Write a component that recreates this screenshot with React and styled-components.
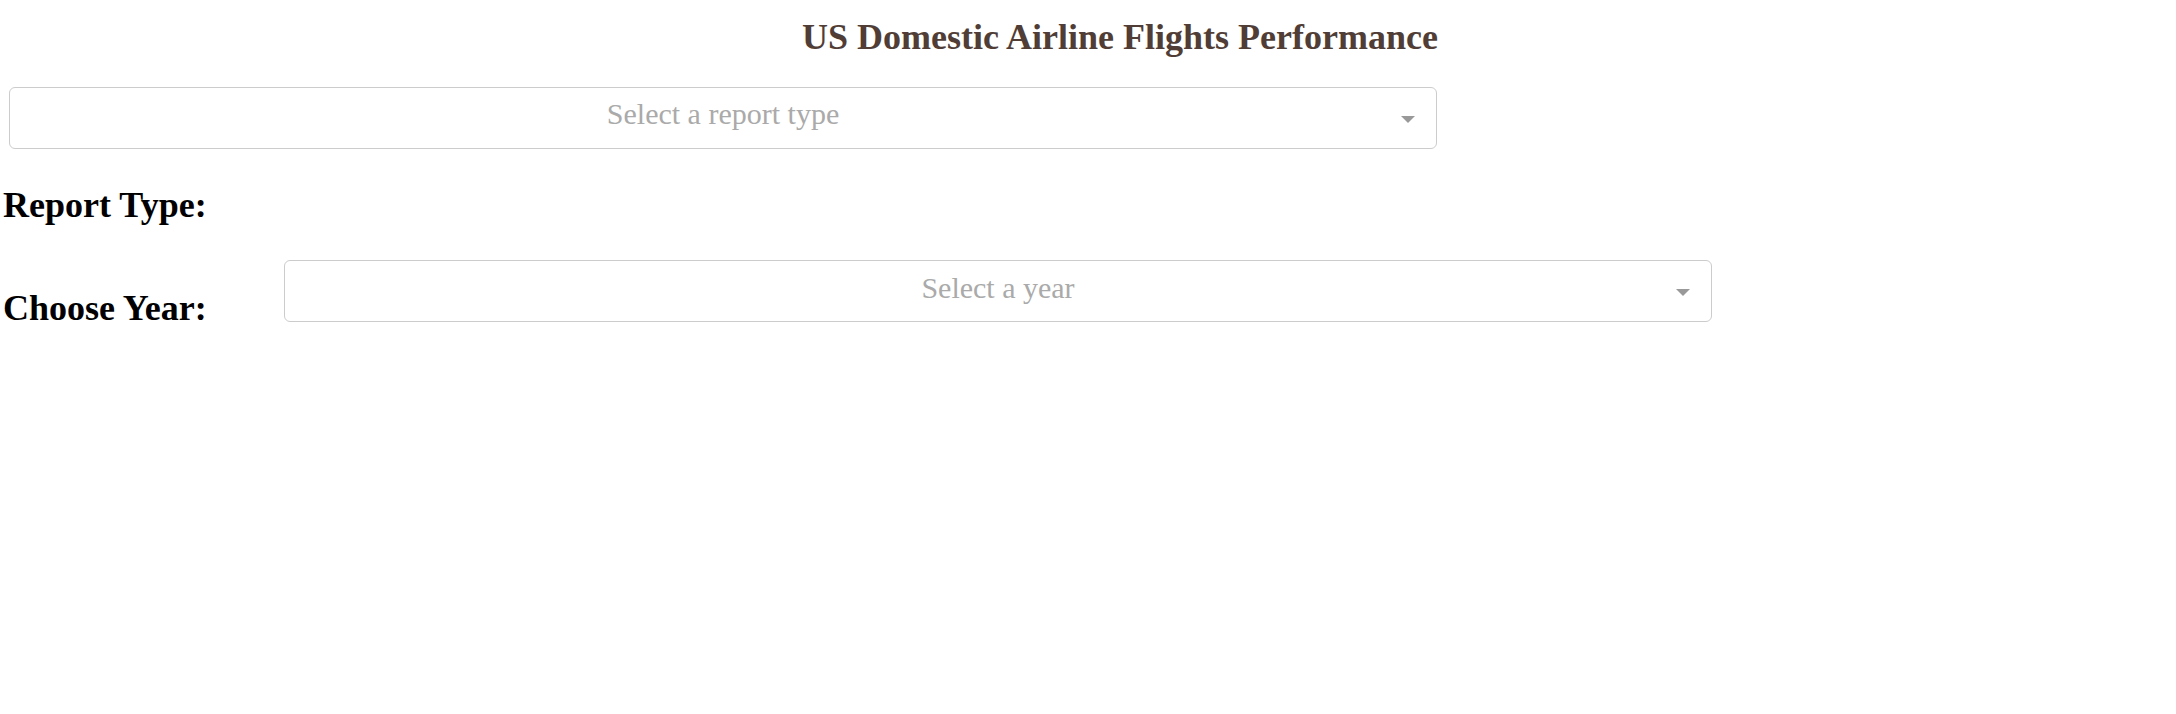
import styled, { createGlobalStyle } from "styled-components";

const GlobalStyle = createGlobalStyle`
  body {
    margin: 0;
    background: #ffffff;
    font-family: "Liberation Serif", "Times New Roman", serif;
  }
`;

const Page = styled.div`
  padding: 0 3px;
`;

const Title = styled.h1`
  margin: 15px 0 0;
  padding-left: 64px;
  text-align: center;
  font-size: 36px;
  line-height: 44px;
  font-weight: bold;
  color: #503d36;
`;

const Select = styled.div`
  display: grid;
  box-sizing: border-box;
  width: 1428px;
  height: 62px;
  margin-left: ${(p) => p.$offset || 0}px;
  margin-top: ${(p) => p.$top || 0}px;
  border: 1px solid #cccccc;
  border-radius: 6px;
  background: #ffffff;
  cursor: default;
`;

const Placeholder = styled.div`
  grid-area: 1 / 1;
  padding-top: ${(p) => p.$pad}px;
  text-align: center;
  font-size: 30px;
  line-height: 30px;
  color: #aaaaaa;
`;

const Arrow = styled.svg`
  grid-area: 1 / 1;
  justify-self: end;
  align-self: center;
  margin: 3px 21px 0 0;
`;

const Label = styled.h2`
  margin: ${(p) => p.$top || 0}px 0 0;
  width: ${(p) => (p.$width ? `${p.$width}px` : "auto")};
  flex-shrink: 0;
  font-size: 36px;
  line-height: 40px;
  font-weight: bold;
  color: #000000;
`;

const Row = styled.div`
  display: flex;
  align-items: flex-start;
  margin-top: ${(p) => p.$top || 0}px;
`;

const Dropdown = ({ placeholder, offset, top, pad }) => (
  <Select $offset={offset} $top={top}>
    <Placeholder $pad={pad}>{placeholder}</Placeholder>
    <Arrow width="14" height="7" viewBox="0 0 14 7">
      <path d="M0 0 L14 0 L7 7 Z" fill="#999999" />
    </Arrow>
  </Select>
);

const App = () => {
  return (
    <>
      <GlobalStyle />
      <Page>
        <Title>US Domestic Airline Flights Performance</Title>
        <Dropdown placeholder="Select a report type" offset={6} top={28} pad={11} />
        <Label $top={36}>Report Type:</Label>
        <Row $top={35}>
          <Label $top={28} $width={281}>
            Choose Year:
          </Label>
          <Dropdown placeholder="Select a year" pad={12} />
        </Row>
      </Page>
    </>
  );
};

export default App;
